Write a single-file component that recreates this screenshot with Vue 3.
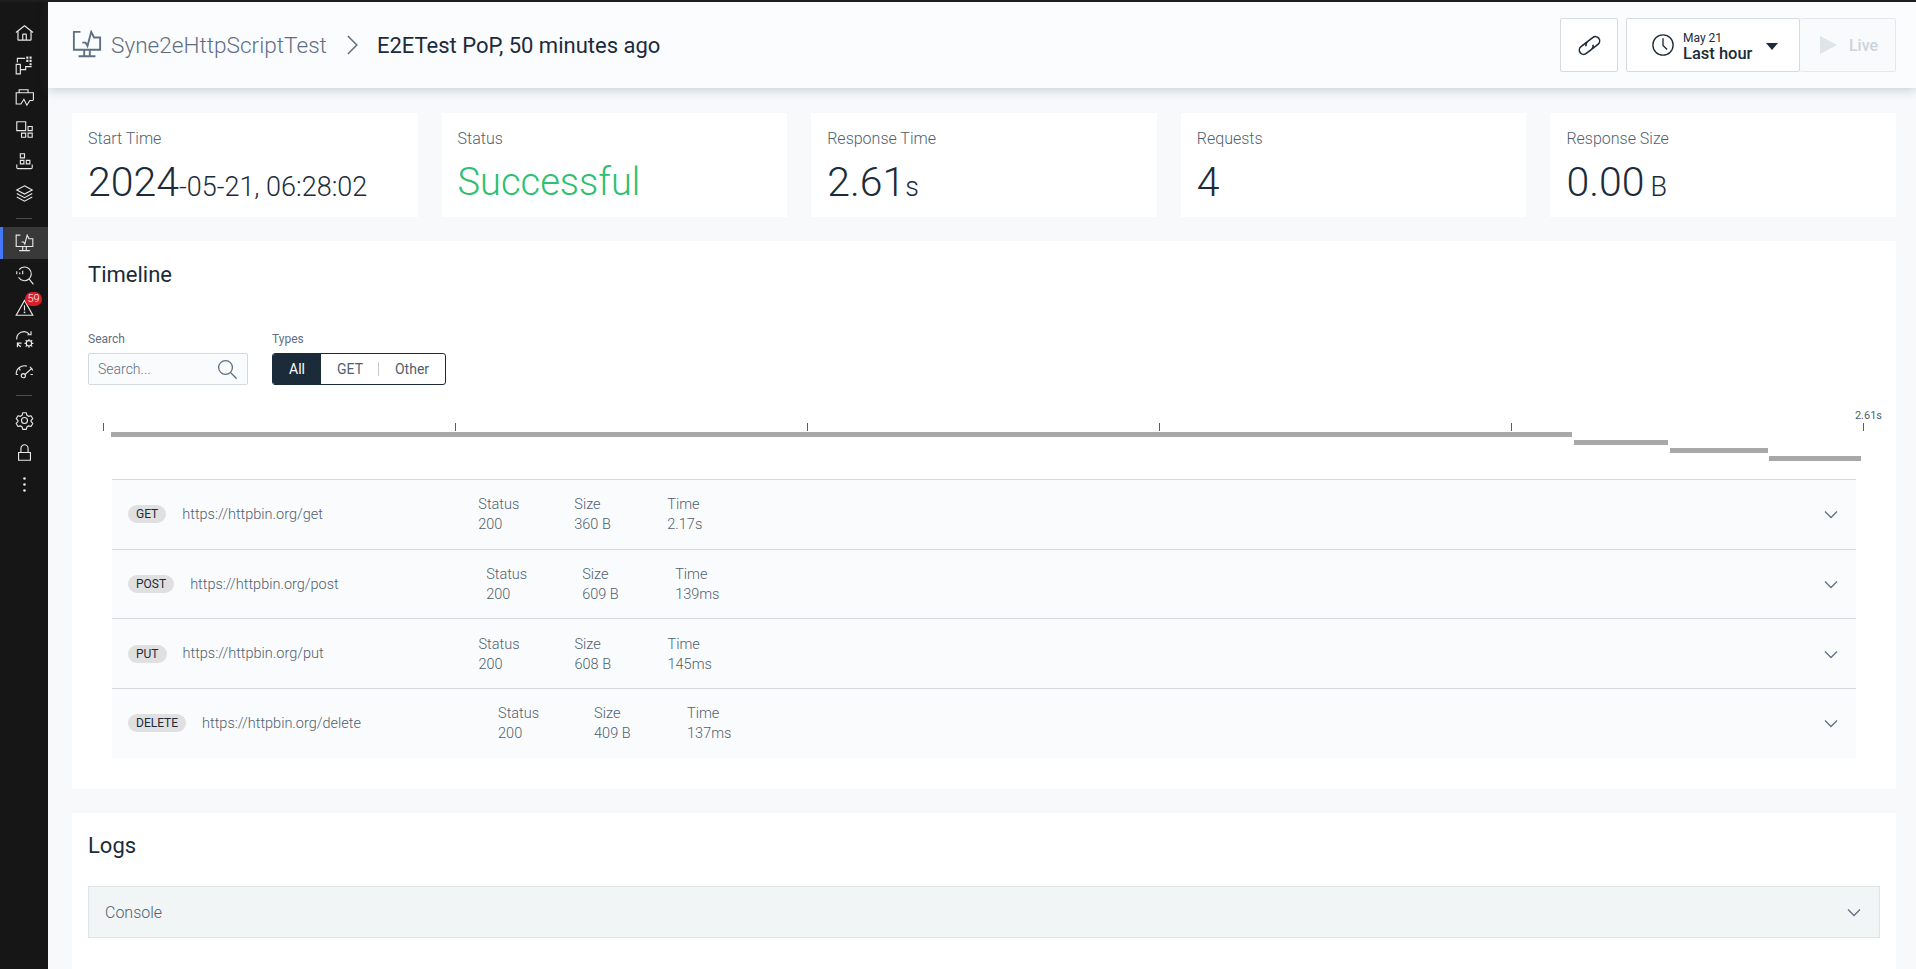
<template>
  <div class="app">
    <aside class="sidebar">
      <div class="nav-group">
        <div v-for="item in topNav" :key="item" class="nav-item">
          <svg viewBox="0 0 32 32" class="nav-icon" v-html="icons[item]"></svg>
        </div>
      </div>
      <div class="nav-line"></div>
      <div class="nav-group">
        <div class="nav-item active">
          <svg viewBox="0 0 32 32" class="nav-icon" v-html="icons.monitor"></svg>
        </div>
        <div v-for="item in midNav" :key="item" class="nav-item">
          <svg viewBox="0 0 32 32" class="nav-icon" v-html="icons[item]"></svg>
          <span v-if="item === 'alert'" class="nav-badge">59</span>
        </div>
      </div>
      <div class="nav-line second"></div>
      <div class="nav-group">
        <div v-for="item in bottomNav" :key="item" class="nav-item">
          <svg viewBox="0 0 32 32" class="nav-icon" v-html="icons[item]"></svg>
        </div>
      </div>
    </aside>

    <div class="main">
      <header class="topbar">
        <div class="crumbs">
          <svg viewBox="0 0 32 32" class="crumb-icon" v-html="icons.monitor"></svg>
          <span class="crumb-parent">Syne2eHttpScriptTest</span>
          <svg viewBox="0 0 16 16" class="crumb-sep"><path d="M5 1.500 11.500 8 5 14.500" /></svg>
          <span class="crumb-current">E2ETest PoP, 50 minutes ago</span>
        </div>
        <div class="top-actions">
          <button class="link-btn">
            <svg viewBox="0 0 32 32" class="link-icon">
              <g transform="rotate(-38 16 16)">
                <path d="M16 10.500H6.500a5.500 5.500 0 0 0 0 11H15a5.500 5.500 0 0 0 5-3.500" />
                <path d="M16 21.500h9.500a5.500 5.500 0 0 0 0-11H17a5.500 5.500 0 0 0-5 3.500" />
              </g>
            </svg>
          </button>
          <div class="range-group">
            <button class="range-btn">
              <svg viewBox="0 0 32 32" class="clock-icon">
                <circle cx="16" cy="16" r="13.500" />
                <path d="M16 7v9.500l5.500 5.500" />
              </svg>
              <span class="range-text">
                <span class="range-date">May 21</span>
                <span class="range-label">Last hour</span>
              </span>
              <span class="caret"></span>
            </button>
            <button class="live-btn">
              <span class="play"></span>
              <span>Live</span>
            </button>
          </div>
        </div>
      </header>

      <div class="content">
        <section class="stats">
          <div class="stat">
            <div class="stat-label">Start Time</div>
            <div class="stat-value">2024<small>-05-21, 06:28:02</small></div>
          </div>
          <div class="stat">
            <div class="stat-label">Status</div>
            <div class="stat-value success">Successful</div>
          </div>
          <div class="stat">
            <div class="stat-label">Response Time</div>
            <div class="stat-value">2.61<small>s</small></div>
          </div>
          <div class="stat">
            <div class="stat-label">Requests</div>
            <div class="stat-value">4</div>
          </div>
          <div class="stat">
            <div class="stat-label">Response Size</div>
            <div class="stat-value">0.00 <small>B</small></div>
          </div>
        </section>

        <section class="panel timeline">
          <h2>Timeline</h2>
          <div class="filters">
            <div>
              <div class="field-label">Search</div>
              <div class="search-box">
                <span>Search...</span>
                <svg viewBox="0 0 32 32" class="search-icon"><circle cx="13" cy="13" r="10.500" /><path d="m21 21 9 9" /></svg>
              </div>
            </div>
            <div>
              <div class="field-label">Types</div>
              <div class="segments">
                <span class="seg on">All</span>
                <span class="seg get">GET</span>
                <span class="seg other">Other</span>
              </div>
            </div>
          </div>

          <div class="chart">
            <span class="end-label">2.61s</span>
            <span v-for="t in ticks" :key="t" class="tick" :style="{ left: t + 'px' }"></span>
            <span v-for="b in bars" :key="b.x" class="bar" :style="{ left: b.x + 'px', top: b.y + 'px', width: b.w + 'px' }"></span>
          </div>

          <div class="requests">
            <div v-for="r in requests" :key="r.url" class="request">
              <span class="method">{{ r.method }}</span>
              <span class="url">{{ r.url }}</span>
              <div class="col col-status"><span>Status</span><span>200</span></div>
              <div class="col col-size"><span>Size</span><span>{{ r.size }}</span></div>
              <div class="col"><span>Time</span><span>{{ r.time }}</span></div>
              <svg viewBox="0 0 16 16" class="chevron"><path d="M2 5.500 8 11.500 14 5.500" /></svg>
            </div>
          </div>
        </section>

        <section class="panel logs">
          <h2>Logs</h2>
          <div class="console">
            <span>Console</span>
            <svg viewBox="0 0 16 16" class="chevron"><path d="M2 5.500 8 11.500 14 5.500" /></svg>
          </div>
        </section>
      </div>
    </div>
  </div>
</template>

<script setup>
const topNav = ['home', 'devices', 'case', 'apps', 'stack', 'layers']
const midNav = ['inspect', 'alert', 'cycle', 'gauge']
const bottomNav = ['gear', 'lock', 'dots']

const icons = {
  home: '<path class="f" d="M16.600 2.200a1 1 0 0 0-1.200 0L1 13.400l1.200 1.600L4 13.600V26a2 2 0 0 0 2 2h20a2 2 0 0 0 2-2V13.600l1.800 1.400 1.200-1.600ZM18 26h-4v-8h4Zm2 0v-8a2 2 0 0 0-2-2h-4a2 2 0 0 0-2 2v8H6V12l10-7.700L26 12v14Z"/>',
  devices: '<path d="M4 11V4h13M2 14h7v16H2zM9 23h9v-5h10"/><path class="f" d="M19 1h3.500v3.500H19zM24.500 1H28v3.500h-3.500zM19 6.500h3.500V10H19zM24.500 6.500H28V10h-3.500zM24.500 12H28v3.500h-3.500z"/>',
  case: '<path d="M7 8V3h15v5M31 20V8H2v19h8l5-8 5 10 5-8h6"/>',
  apps: '<path d="M3 3h15v15H3zM22 11h7v7h-7zM11 22h7v7h-7zM22 22h7v7h-7z"/>',
  stack: '<path d="M9 3h7v7H9zM9 14h6v6H9zM19 14h6v6h-6zM3 21v5a2 2 0 0 0 2 2h22a2 2 0 0 0 2-2v-5"/>',
  layers: '<path d="M16 3 29 10 16 17 3 10ZM3 16l13 7 13-7M3 22l13 7 13-7"/>',
  monitor: '<path d="M9 2H2v19h28V8h-6.500L20.500 2l-4 15-2-3.500H11M13 21v7M19 21v7M7 28h18"/>',
  inspect: '<path d="M7 6A11.500 11.500 0 1 1 6 19M24 22l7 9M3 9v5M8 11v3M13 8v6"/>',
  alert: '<path d="M16 4 30 29H2ZM16 12v9"/><path class="f" d="M14.700 23h2.600v2.600h-2.600z"/>',
  cycle: '<path d="M3 16A12 12 0 0 1 24 7M27 2v6h-6M4 29v-7h7M4 22a11 11 0 0 0 6 6"/><circle cx="23.500" cy="22.500" r="4.500"/><path d="M23.500 15v3M23.500 27v3M16 22.500h3M28 22.500h3M18 17l2 2M27 26l2 2M29 17l-2 2M20 26l-2 2"/>',
  gauge: '<path d="M2 21A14 14 0 0 1 20 7M7 11l2 3M2 21h3M17 21l12-11M25 8l5 6M26 21h4"/><circle cx="14" cy="23" r="3.500"/>',
  gear: '<path d="M13 3h6l1 4 3 2 4-1 3 5-3 3v2l3 3-3 5-4-1-3 2-1 4h-6l-1-4-3-2-4 1-3-5 3-3v-2l-3-3 3-5 4 1 3-2Z" stroke-linejoin="round"/><circle cx="16" cy="16" r="5"/>',
  lock: '<path d="M6 16h20v13H6zM10 16V9a6 6 0 0 1 12 0v7"/>',
  dots: '<circle class="f" cx="16" cy="6" r="2.200"/><circle class="f" cx="16" cy="16" r="2.200"/><circle class="f" cx="16" cy="26" r="2.200"/>'
}

const ticks = [31, 383, 735, 1087, 1439, 1791]
const bars = [
  { x: 39, y: 28, w: 1461 },
  { x: 1502, y: 36, w: 94 },
  { x: 1598, y: 44, w: 98 },
  { x: 1697, y: 52, w: 92 }
]

const requests = [
  { method: 'GET', url: 'https://httpbin.org/get', size: '360 B', time: '2.17s' },
  { method: 'POST', url: 'https://httpbin.org/post', size: '609 B', time: '139ms' },
  { method: 'PUT', url: 'https://httpbin.org/put', size: '608 B', time: '145ms' },
  { method: 'DELETE', url: 'https://httpbin.org/delete', size: '409 B', time: '137ms' }
]
</script>

<style>
html, body {
  margin: 0;
  height: 100%;
  overflow: hidden;
  background: #f7f9fb;
}
</style>

<style scoped>
.app {
  display: flex;
  height: 969px;
  overflow: hidden;
  font-family: Roboto, "Open Sans", sans-serif;
  color: #1c2b3a;
  border-top: 2px solid #1d1d1d;
  box-sizing: border-box;
}
.sidebar {
  width: 48px;
  flex: none;
  background: #161616;
  padding-top: 15px;
  box-sizing: border-box;
}
.nav-item {
  position: relative;
  height: 32px;
  display: flex;
  align-items: center;
  justify-content: center;
}
.nav-item.active {
  background: #393939;
  box-shadow: inset 3px 0 0 #4578f9;
}
.nav-icon {
  width: 19px;
  height: 19px;
  fill: none;
  stroke: #e8e8e8;
  stroke-width: 1.900;
}
.nav-icon :deep(.f) {
  fill: #e8e8e8;
  stroke: none;
}
.nav-line {
  width: 16px;
  height: 1px;
  background: #4d4d4d;
  margin: 9px auto 8px;
}
.nav-line.second {
  margin: 8px auto 8px;
}
.nav-badge {
  position: absolute;
  top: 1px;
  left: 25px;
  height: 14px;
  min-width: 17px;
  border-radius: 7px;
  background: #da1e28;
  color: #fff;
  font-size: 11px;
  font-weight: 300;
  line-height: 14px;
  text-align: center;
}
.main {
  flex: 1;
  min-width: 0;
}
.topbar {
  height: 86px;
  background: #fbfcfe;
  box-shadow: 0 2px 10px rgba(60, 75, 95, .25);
  position: relative;
  display: flex;
  align-items: center;
  justify-content: space-between;
  padding: 0 20px 0 24px;
}
.crumbs {
  display: flex;
  align-items: center;
}
.crumb-icon {
  width: 30px;
  height: 30px;
  fill: none;
  stroke: #5f6f82;
  stroke-width: 2;
  margin-right: 9px;
}
.crumb-parent {
  font-size: 22.600px;
  font-weight: 300;
  color: #5f6f82;
}
.crumb-sep {
  width: 22px;
  height: 22px;
  margin: 0 14px;
  fill: none;
  stroke: #5f6f82;
  stroke-width: 1.100;
}
.crumb-current {
  font-size: 22px;
  font-weight: 400;
  color: #1c2b3a;
}
.top-actions {
  display: flex;
  gap: 8px;
}
button {
  font-family: inherit;
  border: 1px solid #d5dade;
  background: #fff;
  border-radius: 2px;
  padding: 0;
  box-sizing: border-box;
  height: 54px;
}
.link-btn {
  width: 58px;
  display: flex;
  align-items: center;
  justify-content: center;
}
.link-icon {
  width: 25px;
  height: 25px;
  fill: none;
  stroke: #1c2b3a;
  stroke-width: 2;
}
.range-group {
  display: flex;
}
.range-btn {
  width: 174px;
  display: flex;
  align-items: center;
  padding-left: 24px;
  border-right: 1px solid #d5dade;
}
.clock-icon {
  width: 24px;
  height: 24px;
  fill: none;
  stroke: #1c2b3a;
  stroke-width: 1.800;
  margin-right: 8px;
}
.range-text {
  display: flex;
  flex-direction: column;
  text-align: left;
  color: #1c2b3a;
  padding-top: 2px;
}
.range-date {
  font-size: 12px;
  line-height: 14px;
}
.range-label {
  font-size: 16.500px;
  line-height: 17px;
  font-weight: 500;
}
.caret {
  width: 0;
  height: 0;
  border-left: 6px solid transparent;
  border-right: 6px solid transparent;
  border-top: 7px solid #1c2b3a;
  margin: 2px 0 0 14px;
}
.live-btn {
  width: 96px;
  display: flex;
  align-items: center;
  justify-content: center;
  gap: 12px;
  padding-left: 3px;
  background: #f9fafc;
  color: #ccd3da;
  font-size: 16px;
  font-weight: 500;
  border-color: #e4e8ec;
  border-left: none;
}
.play {
  width: 0;
  height: 0;
  border-left: 17px solid #dfe4e9;
  border-top: 9px solid transparent;
  border-bottom: 9px solid transparent;
}
.content {
  padding: 25px 20px 0 24px;
}
.stats {
  display: grid;
  grid-template-columns: repeat(5, 1fr);
  gap: 24px;
  margin-bottom: 24px;
}
.stat {
  background: #fff;
  height: 104px;
  padding: 16px;
  box-sizing: border-box;
}
.stat-label {
  font-size: 16px;
  font-weight: 300;
  color: #4f5f70;
  line-height: 20px;
}
.stat-value {
  font-size: 41px;
  font-weight: 300;
  line-height: 48px;
  margin-top: 9px;
  white-space: nowrap;
  word-spacing: -4px;
}
.stat-value small {
  font-size: 27px;
  word-spacing: 0;
}
.stat-value.success {
  font-size: 38px;
  color: #2fbf71;
}
.panel {
  background: #fff;
  padding: 0 16px;
}
h2 {
  margin: 0;
  font-size: 22px;
  font-weight: 400;
  line-height: 28px;
}
.timeline {
  height: 548px;
  margin-bottom: 24px;
  padding-top: 20px;
  box-sizing: border-box;
}
.filters {
  display: flex;
  gap: 24px;
  margin-top: 43px;
}
.field-label {
  font-size: 12px;
  font-weight: 400;
  color: #5f6f82;
  line-height: 14px;
  margin-bottom: 7px;
}
.search-box {
  width: 160px;
  height: 32px;
  border: 1px solid #d5dade;
  border-radius: 2px;
  background: #fafbfd;
  box-sizing: border-box;
  display: flex;
  align-items: center;
  justify-content: space-between;
  padding: 0 9px;
  font-size: 14px;
  font-weight: 300;
  color: #5f6f82;
}
.search-icon {
  width: 21px;
  height: 21px;
  fill: none;
  stroke: #5f6f82;
  stroke-width: 2;
}
.segments {
  display: flex;
  width: 174px;
  height: 32px;
  box-sizing: border-box;
  border: 1px solid #1c2b3a;
  border-radius: 3px;
  overflow: hidden;
  font-size: 14px;
  color: #4f5f70;
}
.seg {
  display: flex;
  align-items: center;
  justify-content: center;
}
.seg.on {
  width: 48px;
  background: #1c2b3a;
  color: #fff;
}
.seg.get {
  width: 58px;
  position: relative;
}
.seg.get::after {
  content: "";
  position: absolute;
  right: 0;
  top: 8px;
  bottom: 8px;
  width: 1px;
  background: #c6ccd3;
}
.seg.other {
  flex: 1;
}
.chart {
  position: relative;
  height: 62px;
  margin: 19px -16px 13px;
}
.end-label {
  position: absolute;
  right: 14px;
  top: 5px;
  font-size: 11px;
  color: #4f5f70;
}
.tick {
  position: absolute;
  top: 19px;
  width: 1px;
  height: 8px;
  background: #4f5f70;
}
.bar {
  position: absolute;
  height: 5px;
  background: #a8a8a8;
}
.requests {
  margin-left: 24px;
  margin-right: 24px;
}
.request {
  height: 69.700px;
  box-sizing: border-box;
  border-top: 1px solid #d5d9dd;
  background: #fafbfd;
  display: flex;
  align-items: center;
  padding: 0 17px 0 16px;
  font-size: 14.500px;
  font-weight: 300;
  color: #4f5f70;
}
.method {
  height: 18px;
  line-height: 18px;
  padding: 0 8px;
  border-radius: 9px;
  background: #e0e0e0;
  color: #1c2b3a;
  font-size: 12px;
  font-weight: 400;
  margin-right: 16px;
}
.url {
  width: 296px;
  flex: none;
}
.col {
  display: flex;
  flex-direction: column;
  line-height: 20px;
  padding-top: 2px;
}
.col-status {
  width: 96px;
}
.col-size {
  width: 93px;
}
.chevron {
  width: 16px;
  height: 16px;
  margin-left: auto;
  fill: none;
  stroke: #5f6f82;
  stroke-width: 1.300;
}
.logs {
  padding-top: 19px;
  height: 200px;
}
.console {
  height: 52px;
  margin-top: 26px;
  border: 1px solid #dfe4e8;
  background: #f2f5f6;
  display: flex;
  align-items: center;
  padding: 0 17px 0 16px;
  font-size: 16px;
  font-weight: 300;
  color: #4f5f70;
  box-sizing: border-box;
}
</style>
